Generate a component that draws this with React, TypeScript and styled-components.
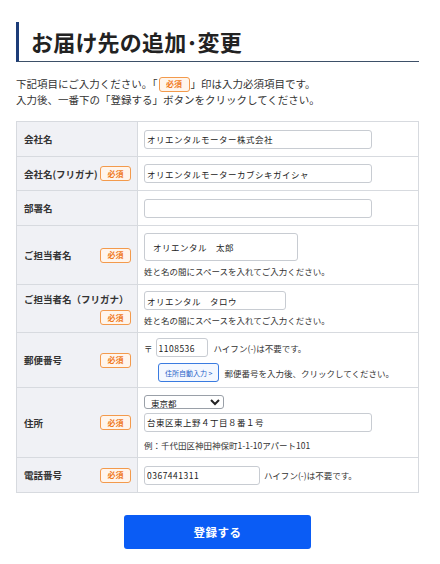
import React, { ReactElement } from 'react'
import styled, { createGlobalStyle } from 'styled-components'

const GlobalStyle = createGlobalStyle`
  html, body {
    margin: 0;
    padding: 0;
    background: #fff;
    font-family: 'Noto Sans CJK JP', 'Noto Sans', sans-serif;
    color: #333;
  }
`

const Page = styled.div`
  padding: 22px 21px 0 16px;
`

const Title = styled.h1`
  margin: 0;
  border-left: 3px solid #1c3c78;
  border-bottom: 1.5px solid #3d5068;
  padding: 3px 0 4px 12px;
  font-size: 22px;
  line-height: 32px;
  font-weight: 700;
  color: #222;
  letter-spacing: 0.2px;
`

const Intro = styled.p`
  margin: 14px 0 13px;
  font-size: 10.5px;
  line-height: 16px;
  color: #333;
`

const Badge = styled.span<{ $inline?: boolean }>`
  display: inline-flex;
  align-items: center;
  justify-content: center;
  width: 31px;
  height: 15px;
  border: 1px solid #f39a4c;
  border-radius: 3px;
  background: #fff5ec;
  color: #f07a1c;
  font-size: 8px;
  line-height: 1;
  font-weight: 700;
  box-sizing: border-box;
  vertical-align: middle;
  margin: ${(p) => (p.$inline ? '-2px 1px 0' : '0')};
`

const Table = styled.table`
  width: 100%;
  border-collapse: collapse;
  border: 1px solid #d7dadf;
`

const Row = styled.tr<{ $h: number }>`
  height: ${(p) => p.$h}px;
  border-bottom: 1px solid #d7dadf;
`

const LabelCell = styled.th`
  width: 121px;
  box-sizing: border-box;
  background: #f0f1f5;
  border-right: 1px solid #d7dadf;
  padding: 0 6px 0 7px;
  text-align: left;
  vertical-align: middle;
`

const LabelInner = styled.div<{ $wrap?: boolean }>`
  display: flex;
  flex-wrap: ${(p) => (p.$wrap ? 'wrap' : 'nowrap')};
  justify-content: space-between;
  align-items: center;
  row-gap: 4px;
  font-size: 9.5px;
  font-weight: 700;
  color: #333;
`

const WrapBadge = styled.div`
  display: flex;
  justify-content: flex-end;
  width: 100%;
`

const ValueCell = styled.td`
  padding: 5px 5px 5px 6px;
  vertical-align: middle;
  font-size: 9px;
  color: #333;
`

const Field = styled.input<{ $w: number; $h?: number; $pad?: number }>`
  display: block;
  width: ${(p) => p.$w}px;
  height: ${(p) => p.$h ?? 19}px;
  box-sizing: border-box;
  border: 1px solid #c8ccd2;
  border-radius: 3px;
  padding: 0 ${(p) => p.$pad ?? 2}px;
  font-family: inherit;
  font-size: 8.5px;
  letter-spacing: 0.5px;
  color: #222;
  background: #fff;
  outline: none;
`

const Line = styled.div<{ $gap?: number }>`
  display: flex;
  align-items: center;
  gap: ${(p) => p.$gap ?? 5}px;
`

const Note = styled.div<{ $top?: number }>`
  margin-top: ${(p) => p.$top ?? 5}px;
  font-size: 8.5px;
  line-height: 12px;
  color: #333;
`

const Hint = styled.span<{ $left?: number }>`
  margin-left: ${(p) => p.$left ?? 0}px;
  font-size: 8.5px;
  color: #333;
`

const AutoButton = styled.button`
  height: 19px;
  padding: 0 6px;
  margin-left: 14px;
  border: 1px solid #3a7be0;
  border-radius: 3px;
  background: #f4f8ff;
  color: #1f5fc8;
  font-family: inherit;
  font-size: 7px;
  cursor: pointer;
`

const Select = styled.select`
  display: block;
  width: 80px;
  height: 14px;
  box-sizing: border-box;
  border: 1px solid #9aa0a8;
  border-radius: 3px;
  padding: 0 2px;
  font-family: inherit;
  font-size: 8.5px;
  color: #222;
  background: #fff;
`

const AddressField = styled(Field)`
  margin-top: 4px;
`

const AutoLine = styled(Line)`
  margin-top: 6px;
`

const Footer = styled.div`
  display: flex;
  justify-content: center;
  padding-top: 22px;
`

const Submit = styled.button`
  width: 187px;
  height: 34px;
  border: none;
  border-radius: 3px;
  background: #0a5cf5;
  color: #fff;
  font-family: inherit;
  font-size: 11.5px;
  font-weight: 700;
  letter-spacing: 0.5px;
  cursor: pointer;
`

function Label({ text, required, wrap }: { text: string; required?: boolean; wrap?: boolean }): ReactElement {
  return (
    <LabelCell>
      <LabelInner $wrap={wrap}>
        <span>{text}</span>
        {required &&
          (wrap ? (
            <WrapBadge>
              <Badge>必須</Badge>
            </WrapBadge>
          ) : (
            <Badge>必須</Badge>
          ))}
      </LabelInner>
    </LabelCell>
  )
}

export default function App(): ReactElement {
  return (
    <>
      <GlobalStyle />
      <Page>
        <Title>お届け先の追加･変更</Title>
        <Intro>
          下記項目にご入力ください。「<Badge $inline>必須</Badge>」印は入力必須項目です。
          <br />
          入力後、一番下の「登録する」ボタンをクリックしてください。
        </Intro>
        <Table>
          <tbody>
            <Row $h={35}>
              <Label text="会社名" />
              <ValueCell>
                <Field $w={228} defaultValue="オリエンタルモーター株式会社" />
              </ValueCell>
            </Row>
            <Row $h={34}>
              <Label text="会社名(フリガナ)" required />
              <ValueCell>
                <Field $w={228} defaultValue="オリエンタルモーターカブシキガイシャ" />
              </ValueCell>
            </Row>
            <Row $h={35}>
              <Label text="部署名" />
              <ValueCell>
                <Field $w={228} defaultValue="" />
              </ValueCell>
            </Row>
            <Row $h={59}>
              <Label text="ご担当者名" required />
              <ValueCell>
                <Field $w={154} $h={28} $pad={8} defaultValue="オリエンタル　太郎" />
                <Note $top={4}>姓と名の間にスペースを入れてご入力ください。</Note>
              </ValueCell>
            </Row>
            <Row $h={48}>
              <Label text="ご担当者名（フリガナ）" required wrap />
              <ValueCell>
                <Field $w={142} defaultValue="オリエンタル　タロウ" />
                <Note $top={4}>姓と名の間にスペースを入れてご入力ください。</Note>
              </ValueCell>
            </Row>
            <Row $h={55}>
              <Label text="郵便番号" required />
              <ValueCell>
                <Line $gap={3}>
                  <Hint>〒</Hint>
                  <Field $w={52} defaultValue="1108536" />
                  <Hint $left={3}>ハイフン(-)は不要です。</Hint>
                </Line>
                <AutoLine $gap={5}>
                  <AutoButton>住所自動入力 &gt;</AutoButton>
                  <Hint>郵便番号を入力後、クリックしてください。</Hint>
                </AutoLine>
              </ValueCell>
            </Row>
            <Row $h={70}>
              <Label text="住所" required />
              <ValueCell>
                <Select defaultValue="東京都">
                  <option>東京都</option>
                </Select>
                <AddressField $w={228} defaultValue="台東区東上野４丁目８番１号" />
                <Note $top={7}>例：千代田区神田神保町1-1-10アパート101</Note>
              </ValueCell>
            </Row>
            <Row $h={35}>
              <Label text="電話番号" required />
              <ValueCell>
                <Line $gap={4}>
                  <Field $w={116} defaultValue="0367441311" />
                  <Hint>ハイフン(-)は不要です。</Hint>
                </Line>
              </ValueCell>
            </Row>
          </tbody>
        </Table>
        <Footer>
          <Submit>登録する</Submit>
        </Footer>
      </Page>
    </>
  )
}
